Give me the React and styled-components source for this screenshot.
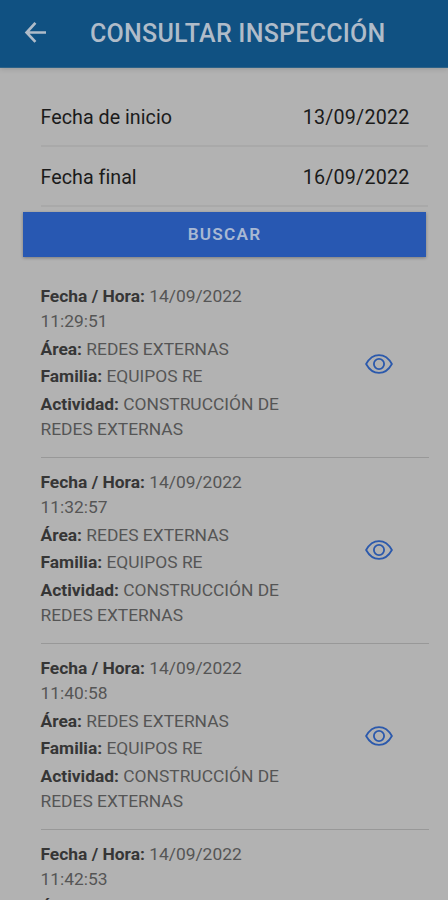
import React from "react";
import styled, { createGlobalStyle } from "styled-components";

const GlobalStyle = createGlobalStyle`
  * { box-sizing: border-box; }
  html, body { margin: 0; padding: 0; background: #b2b2b2; }
  body { font-family: Roboto, "Liberation Sans", sans-serif; overflow: hidden; }
`;

const Screen = styled.div`
  width: 448px;
  height: 900px;
  overflow: hidden;
  background: #b2b2b2;
`;

const Header = styled.header`
  height: 68px;
  display: flex;
  align-items: center;
  padding: 0 0 2px 24px;
  background: #105182;
  border-bottom: 1px solid #2d6287;
  box-shadow: 0 1px 5px rgba(0, 0, 0, 0.15);
`;

const BackIcon = styled.svg`
  width: 23px;
  height: 23px;
  margin-right: 43px;
`;

const Title = styled.h1`
  margin: 0;
  padding-top: 2px;
  font-size: 25px;
  line-height: 32px;
  font-weight: 500;
  letter-spacing: 0.25px;
  color: #b0bcc9;
  white-space: nowrap;
`;

const Filters = styled.section`
  padding: 19px 20px 0 40.5px;
`;

const DateRow = styled.div`
  height: 60px;
  display: flex;
  align-items: center;
  justify-content: space-between;
  padding: 3px 18.5px 0 0;
  border-bottom: 2px solid #a9a9a9;
  font-size: 19.7px;
  line-height: 24px;
  color: #1b1b1b;
`;

const DateLabel = styled.span`
  letter-spacing: 0.03px;
`;

const DateValue = styled.span`
  letter-spacing: 0.2px;
`;

const SearchButton = styled.button`
  display: flex;
  align-items: center;
  justify-content: center;
  width: 403px;
  height: 45px;
  margin: 5px 0 0 23px;
  padding: 0 0 1px;
  border: 0;
  background: #2858b2;
  box-shadow: 0 1px 3px rgba(0, 0, 0, 0.3);
  color: #a9b8d3;
  font: 600 17.2px/20px Roboto, "Liberation Sans", sans-serif;
  letter-spacing: 1.2px;
`;

const Results = styled.ul`
  list-style: none;
  margin: 15px 19px 0 40.5px;
  padding: 0;
`;

const Result = styled.li`
  display: flex;
  align-items: center;
  justify-content: space-between;
  height: 186px;
  padding: 0 36px 1px 0;
  border-bottom: 1px solid #989898;
`;

const Details = styled.div`
  width: 258px;
  display: flex;
  flex-direction: column;
  gap: 2.5px;
  padding-bottom: 2.4px;
`;

const Field = styled.p`
  margin: 0;
  font-size: 17.4px;
  line-height: 25px;
  color: #555;
`;

const FieldName = styled.strong`
  font-weight: 700;
  color: #363636;
`;

const EyeIcon = styled.svg`
  width: 28px;
  height: 20px;
`;

const times = ["11:29:51", "11:32:57", "11:40:58", "11:42:53"];

function ResultItem({ time }) {
  return (
    <Result>
      <Details>
        <Field><FieldName>Fecha / Hora:</FieldName> 14/09/2022<br />{time}</Field>
        <Field><FieldName>Área:</FieldName> REDES EXTERNAS</Field>
        <Field><FieldName>Familia:</FieldName> EQUIPOS RE</Field>
        <Field><FieldName>Actividad:</FieldName> CONSTRUCCIÓN DE<br />REDES EXTERNAS</Field>
      </Details>
      <EyeIcon viewBox="0 0 28 20" fill="none" stroke="#2b59ac" strokeWidth="1.8">
        <path d="M1.1 10C4.2 4.4 8.7 1.1 14 1.1S23.8 4.4 26.9 10C23.8 15.6 19.3 18.9 14 18.9S4.2 15.6 1.1 10Z" strokeLinejoin="round" />
        <circle cx="14" cy="10" r="5.1" />
      </EyeIcon>
    </Result>
  );
}

export default function App() {
  return (
    <>
      <GlobalStyle />
      <Screen>
        <Header>
          <BackIcon viewBox="0 0 23 23" fill="none" stroke="#b0bcc9" strokeWidth="2.7">
            <path d="M11.4 1.9 2.6 11.5l8.8 9.4M2.6 11.5H22" />
          </BackIcon>
          <Title>CONSULTAR INSPECCIÓN</Title>
        </Header>
        <Filters>
          <DateRow><DateLabel>Fecha de inicio</DateLabel><DateValue>13/09/2022</DateValue></DateRow>
          <DateRow><DateLabel>Fecha final</DateLabel><DateValue>16/09/2022</DateValue></DateRow>
        </Filters>
        <SearchButton>BUSCAR</SearchButton>
        <Results>
          {times.map((time) => <ResultItem key={time} time={time} />)}
        </Results>
      </Screen>
    </>
  );
}
